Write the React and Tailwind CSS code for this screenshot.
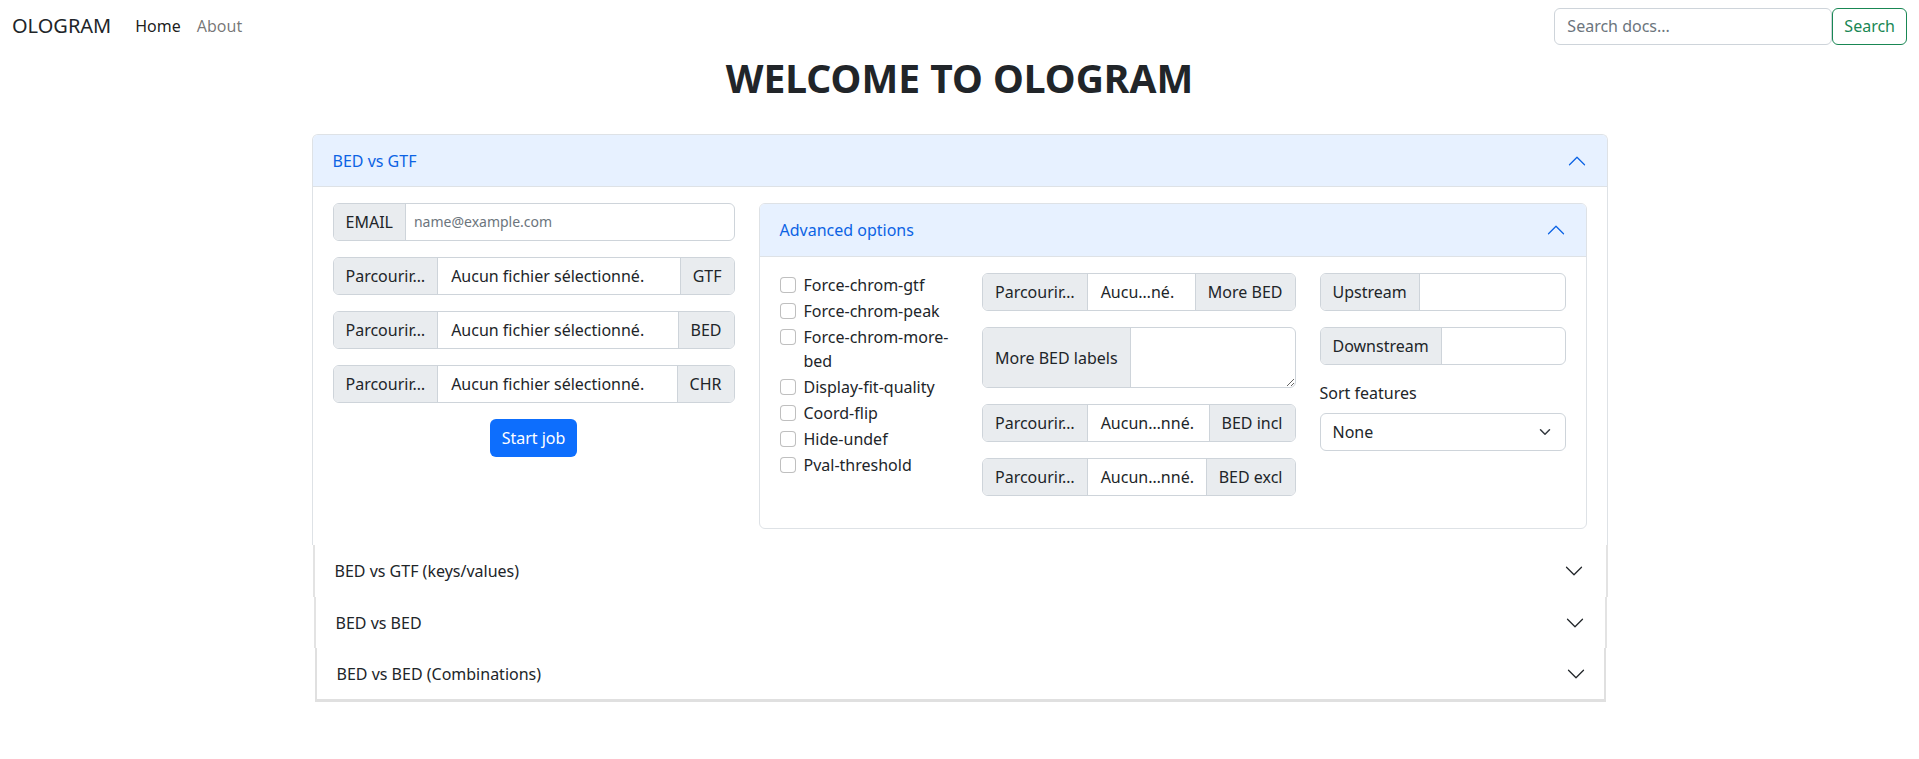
import React from "react";

const Chevron = ({ up = false, color = "#212529" }) => (
  <svg
    width="20"
    height="20"
    viewBox="0 0 16 16"
    fill="none"
    stroke={color}
    strokeLinecap="round"
    strokeLinejoin="round"
    strokeWidth="1"
    style={{ transform: up ? "rotate(180deg)" : "none" }}
  >
    <path d="M2 5L8 11L14 5" />
  </svg>
);

const Addon = ({ children, className = "" }) => (
  <span className={"flex items-center px-3 bg-[#e9ecef] text-[#212529] whitespace-nowrap " + className}>
    {children}
  </span>
);

const FileGroup = ({ name, label, className = "" }) => (
  <div className={"flex h-[38px] border border-[#ced4da] rounded-[6px] overflow-hidden mb-4 " + className}>
    <Addon className="border-r border-[#ced4da]">Parcourir…</Addon>
    <span className="flex-1 flex items-center pl-[13px] pr-2 whitespace-nowrap overflow-hidden">{name}</span>
    <Addon className="border-l border-[#ced4da]">{label}</Addon>
  </div>
);

const Check = ({ children }) => (
  <div className="flex items-start mb-0.5 min-h-6">
    <span className="mt-1 w-4 h-4 flex-none border border-[#00000040] rounded-[4px] bg-white" />
    <span className="ml-2 leading-6">{children}</span>
  </div>
);

export default function App() {
  return (
    <div className="min-h-[759px] bg-white text-[#212529] text-base font-['Noto_Sans',sans-serif]">
      {/* Navbar */}
      <nav className="flex items-center justify-between h-[52px] pl-3 pr-3">
        <div className="flex items-center">
          <span className="text-xl mr-4">OLOGRAM</span>
          <a className="px-2 text-[#000000e6]">Home</a>
          <a className="px-2 text-[#0000008c]">About</a>
        </div>
        <div className="flex items-center">
          <div className="w-[278px] h-[37px] border border-[#ced4da] rounded-[6px] flex items-center px-3 text-[#6c757d]">
            Search docs...
          </div>
          <div className="h-[37px] px-[11px] border border-[#198754] rounded-[6px] flex items-center text-[#198754]">
            Search
          </div>
        </div>
      </nav>

      <h1 className="text-center font-bold text-[39px] leading-[47px] mt-[2px] mb-[33px]">WELCOME TO OLOGRAM</h1>

      <div className="max-w-[1320px] mx-auto px-3">
        {/* Item 1 */}
        <div className="border border-b-0 border-[#dee2e6] rounded-t-[6px] overflow-hidden">
          <div className="h-[52px] bg-[#e7f1ff] text-[#0c63e4] flex items-center justify-between px-5 border-b border-[#dee2e6]">
            <span>BED vs GTF</span>
            <Chevron up color="#0c63e4" />
          </div>
          <div className="px-5 pt-4 pb-4 grid grid-cols-3 gap-x-6">
            <div>
              <div className="flex h-[38px] border border-[#ced4da] rounded-[6px] overflow-hidden mb-4">
                <Addon className="border-r border-[#ced4da]">EMAIL</Addon>
                <span className="flex-1 flex items-center px-2 text-sm text-[#6c757d]">name@example.com</span>
              </div>
              <FileGroup name="Aucun fichier sélectionné." label="GTF" />
              <FileGroup name="Aucun fichier sélectionné." label="BED" />
              <FileGroup name="Aucun fichier sélectionné." label="CHR" />
              <div className="flex justify-center">
                <button className="h-[38px] px-3 rounded-[6px] bg-[#0d6efd] text-white">Start job</button>
              </div>
            </div>

            <div className="col-span-2 border border-[#dee2e6] rounded-[6px] overflow-hidden">
              <div className="h-[53px] bg-[#e7f1ff] text-[#0c63e4] flex items-center justify-between px-5 border-b border-[#dee2e6]">
                <span>Advanced options</span>
                <Chevron up color="#0c63e4" />
              </div>
              <div className="px-5 pt-4 pb-4 grid grid-cols-12 gap-x-6">
                <div className="col-span-3">
                  <Check>Force-chrom-gtf</Check>
                  <Check>Force-chrom-peak</Check>
                  <Check>
                    Force-chrom-more-
                    <br />
                    bed
                  </Check>
                  <Check>Display-fit-quality</Check>
                  <Check>Coord-flip</Check>
                  <Check>Hide-undef</Check>
                  <Check>Pval-threshold</Check>
                </div>
                <div className="col-span-5">
                  <FileGroup name="Aucu…né." label="More BED" />
                  <div className="flex h-[61px] border border-[#ced4da] rounded-[6px] overflow-hidden mb-4">
                    <Addon className="border-r border-[#ced4da]">More BED labels</Addon>
                    <textarea className="flex-1 outline-none px-3 py-1.5 resize" />
                  </div>
                  <FileGroup name="Aucun…nné." label="BED incl" />
                  <FileGroup name="Aucun…nné." label="BED excl" />
                </div>
                <div className="col-span-4">
                  <div className="flex h-[38px] border border-[#ced4da] rounded-[6px] overflow-hidden mb-4">
                    <Addon className="border-r border-[#ced4da]">Upstream</Addon>
                    <span className="flex-1" />
                  </div>
                  <div className="flex h-[38px] border border-[#ced4da] rounded-[6px] overflow-hidden mb-4">
                    <Addon className="border-r border-[#ced4da]">Downstream</Addon>
                    <span className="flex-1" />
                  </div>
                  <div className="leading-6 mb-2">Sort features</div>
                  <div className="flex items-center justify-between h-[38px] border border-[#ced4da] rounded-[6px] pl-3 pr-3">
                    <span>None</span>
                    <svg width="16" height="12" viewBox="0 0 16 16" fill="none" stroke="#343a40" strokeWidth="2" strokeLinecap="round" strokeLinejoin="round">
                      <path d="m2 5 6 6 6-6" />
                    </svg>
                  </div>
                </div>
              </div>
            </div>
          </div>
        </div>

        {/* Collapsed items */}
        <div className="h-[52px] flex items-center justify-between pl-5 pr-[22px] ml-px border-l-2 border-r-2 border-[#e3e3e3]">
          <span>BED vs GTF (keys/values)</span>
          <Chevron />
        </div>
        <div className="h-[51px] flex items-center justify-between pl-5 pr-5 ml-[2px] mr-[1px] border-l-2 border-r-2 border-[#e3e3e3]">
          <span>BED vs BED</span>
          <Chevron />
        </div>
        <div className="h-[54px] flex items-center justify-between pl-5 pr-[18px] ml-[3px] mr-[2px] border-l-2 border-r-2 border-b-[3px] border-[#e0e0e0]">
          <span>BED vs BED (Combinations)</span>
          <Chevron />
        </div>
      </div>
    </div>
  );
}
